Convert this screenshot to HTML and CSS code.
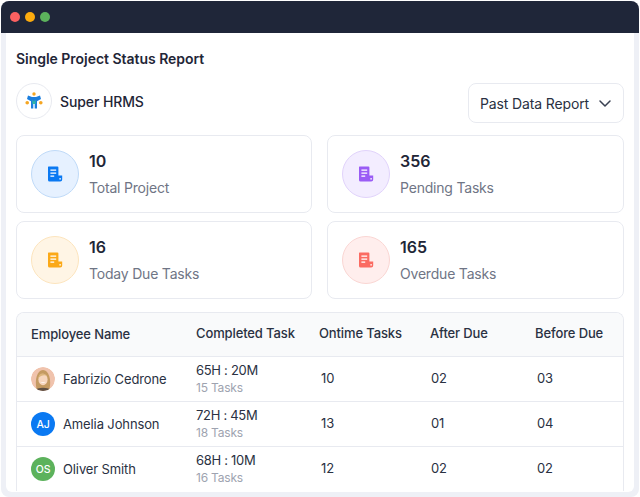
FILE: index.html
```html
<!DOCTYPE html>
<html lang="en">
<head>
<meta charset="utf-8">
<title>Single Project Status Report</title>
<link rel="stylesheet" href="styles.css">
</head>
<body>
<div class="window">
  <header class="titlebar">
    <span class="dot dot-red"></span><span class="dot dot-amber"></span><span class="dot dot-green"></span>
  </header>
  <main class="sheet">
    <h1 class="title">Single Project Status Report</h1>
    <div class="toolbar">
      <div class="brand">
        <span class="brand-logo">
          <svg width="18" height="18" viewBox="0 0 18 18">
            <circle cx="9" cy="2" r="1.7" fill="#f5a623"/>
            <path d="M3 3.4 L7 5 H11 L15 3.4 L16 7 L12 9.2 V16.6 H9.7 V11 H8.3 V16.6 H6 V9.2 L2 7 Z" fill="#1a7ede"/>
            <path d="M7.4 7.6 L9 9.6 L10.6 7.6 V12 H7.4 Z" fill="#2fb6a8"/>
            <circle cx="2.2" cy="10.8" r="1.8" fill="#f5a623"/>
            <circle cx="15.8" cy="10.8" r="1.8" fill="#f5a623"/>
          </svg>
        </span>
        <span class="brand-name">Super HRMS</span>
      </div>
      <div class="select">
        <span>Past Data Report</span>
        <svg class="chevron" width="12" height="7" viewBox="0 0 12 7"><path d="M1 1 L6 6 L11 1" fill="none" stroke="#3a4152" stroke-width="1.5" stroke-linecap="round" stroke-linejoin="round"/></svg>
      </div>
    </div>
    <section class="cards">
      <article class="card">
        <span class="badge badge-blue"><svg class="doc" width="16" height="16" viewBox="0 0 16 16"><use href="#doc"/></svg></span>
        <div class="card-text"><div class="num">10</div><div class="label">Total Project</div></div>
      </article>
      <article class="card">
        <span class="badge badge-purple"><svg class="doc" width="16" height="16" viewBox="0 0 16 16"><use href="#doc"/></svg></span>
        <div class="card-text"><div class="num">356</div><div class="label">Pending Tasks</div></div>
      </article>
      <article class="card">
        <span class="badge badge-amber"><svg class="doc" width="16" height="16" viewBox="0 0 16 16"><use href="#doc"/></svg></span>
        <div class="card-text"><div class="num">16</div><div class="label">Today Due Tasks</div></div>
      </article>
      <article class="card">
        <span class="badge badge-red"><svg class="doc" width="16" height="16" viewBox="0 0 16 16"><use href="#doc"/></svg></span>
        <div class="card-text"><div class="num">165</div><div class="label">Overdue Tasks</div></div>
      </article>
    </section>
    <section class="table">
      <div class="row head">
        <div class="cell name-head">Employee Name</div>
        <div class="cell">Completed Task</div>
        <div class="cell">Ontime Tasks</div>
        <div class="cell">After Due</div>
        <div class="cell">Before Due</div>
      </div>
      <div class="row">
        <div class="cell person">
          <svg class="avatar" width="24" height="24" viewBox="0 0 24 24">
            <clipPath id="round"><circle cx="12" cy="12" r="12"/></clipPath>
            <g clip-path="url(#round)">
              <rect width="24" height="24" fill="#f0c3ad"/>
              <path d="M5.5 22 C3.5 13 6 3 12 3 C18 3 20.5 13 18.5 22 Z" fill="#c49a62"/>
              <path d="M3 24 C6 19.5 18 19.5 21 24 Z" fill="#5f5044"/>
              <ellipse cx="12" cy="12.5" rx="4.6" ry="5.8" fill="#f6d6bf"/>
              <path d="M9 14.8 Q12 17.4 15 14.8 Q12 15.8 9 14.8 Z" fill="#fff"/>
              <path d="M7.2 11.5 C7.5 6 12.5 4.5 16.6 9.5 C14 7.5 10 8 7.2 11.5 Z" fill="#dcb57e"/>
            </g>
          </svg>
          <span>Fabrizio Cedrone</span>
        </div>
        <div class="cell time"><div>65H : 20M</div><div class="sub">15 Tasks</div></div>
        <div class="cell val">10</div><div class="cell val val-tight">02</div><div class="cell val">03</div>
      </div>
      <div class="row">
        <div class="cell person"><span class="avatar initials av-blue">AJ</span><span>Amelia Johnson</span></div>
        <div class="cell time"><div>72H : 45M</div><div class="sub">18 Tasks</div></div>
        <div class="cell val">13</div><div class="cell val val-tight">01</div><div class="cell val">04</div>
      </div>
      <div class="row">
        <div class="cell person"><span class="avatar initials av-green">OS</span><span>Oliver Smith</span></div>
        <div class="cell time"><div>68H : 10M</div><div class="sub">16 Tasks</div></div>
        <div class="cell val">12</div><div class="cell val val-tight">02</div><div class="cell val">02</div>
      </div>
    </section>
  </main>
</div>
<svg width="0" height="0" class="defs">
  <symbol id="doc" viewBox="0 0 16 16">
    <path d="M1.6 0.5 H10.4 A1 1 0 0 1 11.4 1.5 V9.6 H15.2 V13.6 A2 2 0 0 1 13.2 15.6 H2.6 A1.6 1.6 0 0 1 1 14 V1.1 A.6 .6 0 0 1 1.6 .5 Z" fill="currentColor"/>
    <rect x="3.4" y="3.4" width="5.8" height="1.5" fill="#fff" opacity=".85"/>
    <rect x="3.4" y="6.4" width="5.8" height="1.5" fill="#fff" opacity=".85"/>
    <rect x="3.4" y="9.4" width="3.8" height="1.5" fill="#fff" opacity=".85"/>
    <rect x="12.4" y="12" width="1.4" height="1.6" fill="#fff" opacity=".9"/>
  </symbol>
</svg>
</body>
</html>
```

FILE: styles.css
```css
* { box-sizing: border-box; }
html, body { margin: 0; height: 100%; }
body {
  width: 640px;
  height: 497px;
  overflow: hidden;
  background: #fff;
  font-family: Inter, "Liberation Sans", sans-serif;
  color: #1f2637;
}
.defs { display: block; height: 0; }
.window {
  margin: 1px 1px 0;
  height: 496px;
  background: #eef0f6;
  border-radius: 8px;
  display: flex;
  flex-direction: column;
  overflow: hidden;
}
.titlebar {
  height: 32px;
  flex: none;
  background: #1f2639;
  display: flex;
  align-items: center;
  gap: 5px;
  padding-left: 9px;
}
.dot { width: 10px; height: 10px; border-radius: 50%; }
.dot-red { background: #fb6161; }
.dot-amber { background: #fbab0e; }
.dot-green { background: #5cb25c; }
.sheet {
  margin: 0 5px 5px 5px;
  height: 459px;
  background: #fff;
  padding: 0 10px 0 10px;
  border-radius: 0 0 6px 6px;
  overflow: hidden;
}
.title {
  margin: 16px 0 0;
  font-size: 14px;
  line-height: 20px;
  font-weight: 600;
  letter-spacing: -0.03px;
}
.toolbar {
  display: flex;
  justify-content: space-between;
  align-items: flex-start;
  margin-top: 14px;
}
.brand { display: flex; align-items: center; gap: 8px; height: 36px; }
.brand-logo {
  width: 36px;
  height: 36px;
  border: 1px solid #e8eaf0;
  border-radius: 50%;
  display: flex;
  align-items: center;
  justify-content: center;
}
.brand-name { font-size: 14px; font-weight: 500; letter-spacing: -0.1px; }
.select {
  width: 156px;
  height: 40px;
  border: 1px solid #e8eaf0;
  border-radius: 8px;
  display: flex;
  align-items: center;
  justify-content: space-between;
  padding: 0 12px 0 11px;
  font-size: 14px;
  letter-spacing: -0.13px;
  color: #2a3142;
}
.cards {
  display: grid;
  grid-template-columns: 296px 297px;
  column-gap: 15px;
  row-gap: 8px;
  margin-top: 12px;
}
.card {
  height: 78px;
  border: 1px solid #e8eaf0;
  border-radius: 8px;
  display: flex;
  align-items: center;
  gap: 10px;
  padding-left: 14px;
}
.badge {
  width: 48px;
  height: 48px;
  flex: none;
  border-radius: 50%;
  border: 1px solid;
  display: flex;
  align-items: center;
  justify-content: center;
}
.badge-blue { background: #e6f1ff; border-color: #bfdaf8; color: #0a79f2; }
.badge-purple { background: #f3edff; border-color: #e1d3fb; color: #9a5cf5; }
.badge-amber { background: #fff5e5; border-color: #fce4bd; color: #fba918; }
.badge-red { background: #ffeeed; border-color: #fad6d3; color: #fb6b62; }
.num { font-size: 16px; line-height: 22px; font-weight: 600; }
.label { font-size: 14px; line-height: 20px; margin-top: 6px; color: #6f7585; letter-spacing: -0.2px; }
.table {
  margin-top: 13px;
  border: 1px solid #e8eaf0;
  border-radius: 8px 8px 0 0;
  border-bottom: 0;
  height: 179px;
  overflow: hidden;
}
.row {
  display: grid;
  grid-template-columns: 165px 123px 111px 105px 1fr;
  height: 45px;
  border-top: 1px solid #e8eaf0;
  font-size: 13px;
  letter-spacing: -0.12px;
  color: #2a3142;
}
.row.head {
  border-top: 0;
  height: 43px;
  background: #f9fafb;
  font-weight: 450;
}
.cell { padding-left: 14px; display: flex; align-items: center; }
.head .cell { padding-bottom: 3px; }
.head .name-head { padding-bottom: 1px; }
.person { gap: 8px; font-size: 13px; }
.person svg.avatar { flex: none; }
.avatar { width: 24px; height: 24px; border-radius: 50%; flex: none; }
.initials {
  color: #fff;
  font-size: 10.5px;
  font-weight: 500;
  display: flex;
  align-items: center;
  justify-content: center;
}
.av-blue { background: #0a79f2; }
.av-green { background: #5cb25c; }
.time { flex-direction: column; align-items: flex-start; justify-content: center; line-height: 17px; padding-bottom: 1px; letter-spacing: -0.3px; }
.sub { font-size: 12px; line-height: 17px; color: #9ea3b0; letter-spacing: -0.2px; }
.val { padding-left: 16px !important; padding-bottom: 3px; }
.val-tight { padding-left: 15px !important; }
```
